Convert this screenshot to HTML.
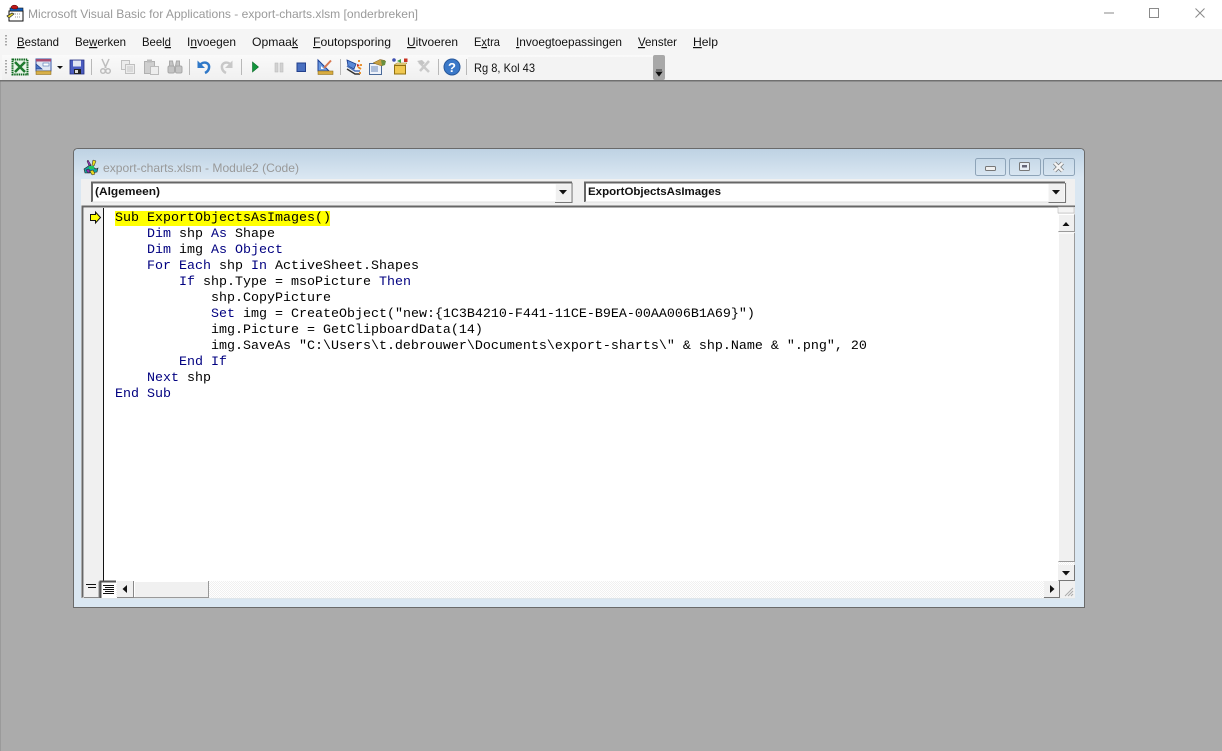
<!DOCTYPE html>
<html><head><meta charset="utf-8"><style>
html,body{margin:0;padding:0;width:1222px;height:751px;overflow:hidden;background:#ababab}
svg{display:block}
.m{font:12px "Liberation Sans",sans-serif;fill:#111}
.c{font:13.33px "Liberation Mono",monospace;fill:#000;white-space:pre}
.k{fill:#000080}
.u{text-decoration:underline}
</style></head><body>
<svg width="1222" height="751" viewBox="0 0 1222 751" xmlns="http://www.w3.org/2000/svg">
<defs>
<linearGradient id="tb" x1="0" y1="0" x2="0" y2="1"><stop offset="0" stop-color="#fafafa"/><stop offset="1" stop-color="#f0f0f0"/></linearGradient>
<linearGradient id="ti" x1="0" y1="0" x2="0" y2="1"><stop offset="0" stop-color="#bed2e3"/><stop offset="1" stop-color="#dae7f2"/></linearGradient>
<pattern id="dot" width="2" height="2" patternUnits="userSpaceOnUse"><rect width="2" height="2" fill="#fff"/><rect width="1" height="1" fill="#f0f0f0"/><rect x="1" y="1" width="1" height="1" fill="#f0f0f0"/></pattern>
</defs>
<rect width="1222" height="751" fill="#ababab"/>
<rect x="0" y="0" width="1" height="751" fill="#9a9a9a"/>
<!-- title bar -->
<rect width="1222" height="29" fill="#fff"/>
<g>
<rect x="9" y="11" width="14" height="10" fill="#fff" stroke="#111"/>
<rect x="10" y="8" width="13" height="3" fill="#1060c0" stroke="#111" stroke-width=".6"/>
<path d="M11 7.500C11 5 16 4 18 7l-1 2h-4z" fill="#c01818" stroke="#400" stroke-width=".5"/>
<path d="M7 16l5-3 2 1-5 4z" fill="#e8d830" stroke="#333" stroke-width=".8"/>
<path d="M15 14h6M15 17h6" stroke="#999" stroke-dasharray="1 1"/>
</g>
<text x="28" y="18" font-family="Liberation Sans" font-size="12" fill="#9a9a9a" textLength="390" lengthAdjust="spacingAndGlyphs">Microsoft Visual Basic for Applications - export-charts.xlsm [onderbreken]</text>
<path d="M1104 13h10" stroke="#8a8a8a"/>
<rect x="1149.500" y="8.500" width="9" height="9" fill="none" stroke="#8a8a8a"/>
<path d="M1195.500 8.500l9 9M1204.500 8.500l-9 9" stroke="#8a8a8a" fill="none"/>
<!-- menu bar -->
<rect y="29" width="1222" height="52" fill="#f5f5f5"/>
<path d="M6 35v1.500M6 38v1.500M6 41v1.500M6 44v1.500" stroke="#a8a8a8" stroke-width="2"/>
<text class="m" x="17" y="46" textLength="42" lengthAdjust="spacingAndGlyphs"><tspan class="u">B</tspan>estand</text>
<text class="m" x="75" y="46" textLength="51" lengthAdjust="spacingAndGlyphs">Be<tspan class="u">w</tspan>erken</text>
<text class="m" x="142" y="46" textLength="29" lengthAdjust="spacingAndGlyphs">Beel<tspan class="u">d</tspan></text>
<text class="m" x="187" y="46" textLength="49" lengthAdjust="spacingAndGlyphs">I<tspan class="u">n</tspan>voegen</text>
<text class="m" x="252" y="46" textLength="46" lengthAdjust="spacingAndGlyphs">Opmaa<tspan class="u">k</tspan></text>
<text class="m" x="313" y="46" textLength="78" lengthAdjust="spacingAndGlyphs"><tspan class="u">F</tspan>outopsporing</text>
<text class="m" x="407" y="46" textLength="51" lengthAdjust="spacingAndGlyphs"><tspan class="u">U</tspan>itvoeren</text>
<text class="m" x="474" y="46" textLength="26" lengthAdjust="spacingAndGlyphs">E<tspan class="u">x</tspan>tra</text>
<text class="m" x="516" y="46" textLength="106" lengthAdjust="spacingAndGlyphs"><tspan class="u">I</tspan>nvoegtoepassingen</text>
<text class="m" x="638" y="46" textLength="39" lengthAdjust="spacingAndGlyphs"><tspan class="u">V</tspan>enster</text>
<text class="m" x="693" y="46" textLength="25" lengthAdjust="spacingAndGlyphs"><tspan class="u">H</tspan>elp</text>
<!-- toolbar -->
<rect x="2" y="55" width="660" height="25" fill="url(#tb)"/>
<path d="M6 60v1.500M6 63v1.500M6 66v1.500M6 69v1.500M6 72v1.500" stroke="#a8a8a8" stroke-width="2"/>
<rect x="0" y="80" width="1222" height="1.500" fill="#707070"/>
<rect x="468" y="57" width="186" height="23" fill="#f3f3f3"/>
<rect x="653" y="55" width="12" height="25" rx="2" fill="#a8a8a8"/>
<path d="M656 70h6M656 72h6l-3 4z" fill="#111" stroke="#111" stroke-width=".7"/>
<!-- separators -->
<path d="M91.500 59v16M189.500 59v16M241.500 59v16M340.500 59v16M438.500 59v16M466.500 59v16" stroke="#b8b8b8"/>
<!-- excel -->
<rect x="12.500" y="59.500" width="15" height="15" fill="#e8f4e8" stroke="#106a20" stroke-width="2" stroke-dasharray="1.500 .7"/>
<path d="M15 62l10 10M25 62L15 72" stroke="#1f7a2e" stroke-width="2.500"/>
<!-- form -->
<rect x="36" y="59" width="15" height="12" fill="#dfe7f4" stroke="#3b5aa8"/>
<rect x="36" y="59" width="15" height="2.500" fill="#a84a70"/>
<path d="M36 64l6 5h-6z" fill="#4a78c8" stroke="#1a3a8a" stroke-width=".7"/>
<rect x="43" y="63" width="6" height="3" fill="#fff" stroke="#4a70b0" stroke-width=".6"/>
<rect x="36" y="71" width="15" height="3.500" fill="#d8b048" stroke="#806010" stroke-width=".5"/>
<path d="M57 66h6l-3 3z" fill="#111"/>
<!-- save -->
<rect x="70" y="60" width="14" height="14" fill="#4a5cc0" stroke="#232e80" stroke-width=".8"/>
<rect x="73" y="60.500" width="8" height="6" fill="#e0e4f2"/>
<rect x="74" y="69" width="7" height="5" fill="#222"/><rect x="75" y="70" width="3" height="3" fill="#ddd"/>
<!-- cut -->
<g stroke="#bdbdbd" fill="none" stroke-width="1.500"><path d="M102 59l4 9M109 59l-4 9"/><circle cx="103" cy="71" r="2.300"/><circle cx="108" cy="71" r="2.300"/></g>
<!-- copy -->
<g fill="#ececec" stroke="#c0c0c0"><rect x="121.500" y="60.500" width="8" height="9"/><rect x="125.500" y="64.500" width="9" height="9"/></g>
<path d="M127 67h6M127 69h6M127 71h6" stroke="#c8c8c8"/>
<!-- paste -->
<rect x="144.500" y="61.500" width="10" height="12" fill="#cfcfcf" stroke="#b0b0b0"/>
<rect x="147" y="59.500" width="5" height="3" fill="#bbb"/>
<rect x="150.500" y="66.500" width="8" height="8" fill="#eee" stroke="#bcbcbc"/>
<!-- find -->
<g fill="#c4c4c4" stroke="#a8a8a8"><path d="M169.500 61h3l1 5h-4zM176.500 61h3v5h-4z"/><rect x="168" y="66" width="6.500" height="7" rx="1.500"/><rect x="175.500" y="66" width="6.500" height="7" rx="1.500"/></g>
<!-- undo -->
<path d="M200 65c3-4 10-3 9 3c-.3 2-2 4-4 5" fill="none" stroke="#2f78c8" stroke-width="2.500"/>
<path d="M197.500 60.500l7.500 7.500h-7.500z" fill="#2f78c8"/>
<!-- redo -->
<path d="M231 65c-3-4-10-3-9 3c.3 2 2 4 4 5" fill="none" stroke="#c8c8c8" stroke-width="2.500"/>
<path d="M232.500 60.500L225 68h7.500z" fill="#c8c8c8"/>
<!-- run -->
<path d="M252.500 62l6 5-6 5z" fill="#12963c" stroke="#0a6a28" stroke-width=".6"/>
<!-- pause -->
<rect x="275" y="63" width="3" height="9" fill="#d2d2d2" stroke="#bbb" stroke-width=".6"/><rect x="280" y="63" width="3" height="9" fill="#d2d2d2" stroke="#bbb" stroke-width=".6"/>
<!-- stop -->
<rect x="297" y="63" width="8.500" height="8.500" fill="#4a70c0" stroke="#23408c"/>
<!-- design -->
<path d="M318 60v11h11z" fill="#6a9ae0" stroke="#1c3f96"/>
<path d="M321 66v3h3z" fill="#fff"/>
<rect x="318" y="71" width="15" height="3.500" fill="#d8ac40" stroke="#806010" stroke-width=".5"/>
<path d="M324 68l7-7.500" stroke="#d87850" stroke-width="2"/>
<!-- project -->
<path d="M347 60l9 4-2 5-6-3z" fill="#5a8ad8" stroke="#1d3c8c" stroke-width=".8"/>
<path d="M347 66l8 5 5 0" stroke="#4a70b8" fill="none" stroke-width="1.500"/>
<path d="M347 69l8 5h5" stroke="#333" fill="none" stroke-width="1.500"/>
<path d="M359 60v2M361 64v2M358 67l3 2M360 72v2" stroke="#e88a20" fill="none" stroke-width="1.800"/>
<path d="M357 64l3 1-3 2z" fill="#c83020"/>
<!-- properties -->
<rect x="369.500" y="63.500" width="12" height="11" fill="#eef2fa" stroke="#4a6a9a"/>
<path d="M371 67h7M371 69h7M371 71h7" stroke="#6a88b8"/>
<path d="M373 63l7-3.500 5 1-3 5.500z" fill="#c8a040" stroke="#806020" stroke-width=".5"/>
<path d="M381 60l5 1-1 4-3 1z" fill="#6a9040"/>
<!-- object -->
<rect x="394.500" y="65.500" width="11" height="8.500" fill="#f0c850" stroke="#907010"/>
<path d="M394 65l3-2h10l-2 2z" fill="#f8e090" stroke="#907010" stroke-width=".5"/>
<circle cx="394" cy="60" r="1.800" fill="#4050b0"/><rect x="404" y="58.500" width="3.500" height="3.500" fill="#c83020"/><path d="M397 61l4 2v-4z" fill="#40a040"/>
<!-- tools -->
<path d="M419 62l10 10M429 61l-9 10" stroke="#cacaca" stroke-width="2.500"/>
<path d="M417 61l5-1 3 3-3 2z" fill="#c4c4c4"/>
<!-- help -->
<circle cx="452" cy="67" r="8" fill="#3a78c8" stroke="#28589a"/>
<text x="452" y="72" text-anchor="middle" font-family="Liberation Sans" font-weight="bold" font-size="13" fill="#fff">?</text>
<text class="m" x="474" y="72" textLength="61" lengthAdjust="spacingAndGlyphs">Rg 8, Kol 43</text>

<!-- window -->
<path d="M78 148.500H1080Q1084.500 148.500 1084.500 153V607.500H73.500V153Q73.500 148.500 78 148.500Z" fill="#dae7f2" stroke="#6a6a6a"/>
<path d="M78.500 149H1080Q1084 149 1084 153V178H74V153Q74 149 78.500 149Z" fill="url(#ti)"/>
<rect x="81" y="179" width="994" height="419" fill="#f0f0f0"/>
<!-- window icon -->
<g>
<path d="M84 169l6-4 6 4 2-1-1 4-6 1-6 0z" fill="#14a0a0" stroke="#222" stroke-width=".6"/>
<path d="M88 160l3 5-2 1-2-5z" fill="#9030b0" stroke="#222" stroke-width=".5"/>
<path d="M93 160l-1 5 2 1 2-5z" fill="#e8d820" stroke="#222" stroke-width=".5"/>
<path d="M90 171l2 4 3-1-2-4z" fill="#e8d820" stroke="#222" stroke-width=".5"/>
<path d="M86 170l2 3 2-1-1-3z" fill="#9030b0" stroke="#222" stroke-width=".5"/>
<rect x="89" y="166" width="5" height="3" fill="#20c860"/>
</g>
<text x="103" y="172" font-family="Liberation Sans" font-size="12" fill="#999" textLength="196" lengthAdjust="spacingAndGlyphs">export-charts.xlsm - Module2 (Code)</text>
<!-- caption buttons -->
<g fill="none" stroke="#8ea4b8"><rect x="975.500" y="158.500" width="30" height="17" rx="2"/><rect x="1009.500" y="158.500" width="31" height="17" rx="2"/><rect x="1043.500" y="158.500" width="31" height="17" rx="2"/></g>
<rect x="985.500" y="166.500" width="10" height="4" fill="#f0f0f0" stroke="#777" rx="1"/>
<rect x="1019.500" y="162.500" width="10" height="8" fill="#e8eef4" stroke="#777" rx="1"/><rect x="1022" y="165" width="5" height="2.500" fill="#667"/>
<path d="M1054.500 163l8 8M1062.500 163l-8 8" stroke="#777" stroke-width="4"/><path d="M1054.500 163l8 8M1062.500 163l-8 8" stroke="#f4f4f4" stroke-width="2.500"/>
<!-- combos -->
<g>
<rect x="91.500" y="182" width="481" height="20" fill="#fff"/>
<path d="M92 202V182.500H572" fill="none" stroke="#666" stroke-width="2"/>
<path d="M92 202H572.500V182" fill="none" stroke="#e0e0e0"/>
<rect x="555.500" y="184" width="16" height="17" fill="#f0f0f0" stroke="#fff" stroke-width=".5"/>
<path d="M572 183v19.500h-17" fill="none" stroke="#777"/>
<path d="M559 190h8l-4 4.500z" fill="#111"/>
<text x="95" y="195" font-family="Liberation Sans" font-weight="bold" font-size="11" fill="#111" textLength="65" lengthAdjust="spacingAndGlyphs">(Algemeen)</text>
</g>
<g>
<rect x="585" y="182" width="481" height="20" fill="#fff"/>
<path d="M585 202V182.500H1065" fill="none" stroke="#666" stroke-width="2"/>
<path d="M585 202H1066V182" fill="none" stroke="#e0e0e0"/>
<rect x="1048.500" y="184" width="16" height="17" fill="#f0f0f0"/>
<path d="M1065.500 183v19.500h-17" fill="none" stroke="#777"/>
<path d="M1052 190h8l-4 4.500z" fill="#111"/>
<text x="588" y="195" font-family="Liberation Sans" font-weight="bold" font-size="11" fill="#111" textLength="133" lengthAdjust="spacingAndGlyphs">ExportObjectsAsImages</text>
</g>
<!-- code pane -->
<rect x="82" y="206" width="993" height="392" fill="#fff"/>
<rect x="84" y="208" width="19" height="373" fill="#f0f0f0"/>
<rect x="103" y="208" width="1" height="373" fill="#111"/>
<path d="M82.500 598V206.500H1075" fill="none" stroke="#666" stroke-width="2"/>
<path d="M1074.500 207V598H82" fill="none" stroke="#e4e4e4"/>
<!-- exec arrow -->
<path d="M90.500 214.500h5v-2.500l5 5.500-5 5.500v-2.500h-5z" fill="#ffff00" stroke="#111"/>
<!-- code -->
<rect x="115" y="211" width="215" height="15" fill="#ffff00"/>
<text class="c" x="115" y="221" xml:space="preserve"><tspan fill="#000">Sub ExportObjectsAsImages()</tspan></text>
<text class="c" x="115" y="237" xml:space="preserve">    <tspan class="k">Dim</tspan> shp <tspan class="k">As</tspan> Shape</text>
<text class="c" x="115" y="253" xml:space="preserve">    <tspan class="k">Dim</tspan> img <tspan class="k">As</tspan> <tspan class="k">Object</tspan></text>
<text class="c" x="115" y="269" xml:space="preserve">    <tspan class="k">For</tspan> <tspan class="k">Each</tspan> shp <tspan class="k">In</tspan> ActiveSheet.Shapes</text>
<text class="c" x="115" y="285" xml:space="preserve">        <tspan class="k">If</tspan> shp.Type = msoPicture <tspan class="k">Then</tspan></text>
<text class="c" x="115" y="301" xml:space="preserve">            shp.CopyPicture</text>
<text class="c" x="115" y="317" xml:space="preserve">            <tspan class="k">Set</tspan> img = CreateObject("new:{1C3B4210-F441-11CE-B9EA-00AA006B1A69}")</text>
<text class="c" x="115" y="333" xml:space="preserve">            img.Picture = GetClipboardData(14)</text>
<text class="c" x="115" y="349" xml:space="preserve">            img.SaveAs "C:\Users\t.debrouwer\Documents\export-sharts\" &amp; shp.Name &amp; ".png", 20</text>
<text class="c" x="115" y="365" xml:space="preserve">        <tspan class="k">End</tspan> <tspan class="k">If</tspan></text>
<text class="c" x="115" y="381" xml:space="preserve">    <tspan class="k">Next</tspan> shp</text>
<text class="c" x="115" y="397" xml:space="preserve"><tspan class="k">End</tspan> <tspan class="k">Sub</tspan></text>
<!-- vertical scrollbar -->
<rect x="1058" y="208" width="16" height="373" fill="#f0f0f0"/>
<rect x="1058" y="207" width="16" height="6" fill="#f4f4f4" stroke="#aaa" stroke-width=".5"/>
<path d="M1074.500 214.500V231.500H1058.500" fill="none" stroke="#9a9a9a"/>
<path d="M1058.500 231V214.500H1074" fill="none" stroke="#fff"/>
<path d="M1062.500 226h7l-3.500-4z" fill="#111"/>
<path d="M1074.500 233V561.500H1058.500" fill="none" stroke="#9a9a9a"/>
<path d="M1058.500 561V233H1074" fill="none" stroke="#fff"/>
<rect x="1058" y="562" width="16" height="3" fill="url(#dot)"/>
<path d="M1074.500 565V580.500H1058.500" fill="none" stroke="#777"/>
<path d="M1062 571h8l-4 4.500z" fill="#111"/>
<!-- horizontal bar -->
<rect x="84" y="581" width="991" height="17" fill="url(#dot)"/>
<rect x="84" y="581" width="15" height="17" fill="#f0f0f0"/>
<path d="M99 581.500V597.500H84" fill="none" stroke="#888"/>
<path d="M86 584.500h10M88 587.500h8" stroke="#111"/>
<rect x="100" y="581" width="16" height="17" fill="#fff"/>
<path d="M100.500 598V581.500H116" fill="none" stroke="#555" stroke-width="2"/>
<path d="M103 585.500h11M105 587.500h9M103 589.500h11M105 591.500h9M103 593.500h11" stroke="#111"/>
<rect x="117" y="581" width="16" height="17" fill="#f0f0f0"/>
<path d="M133.500 581V597.500H117" fill="none" stroke="#888"/>
<path d="M127 585v8l-4.500-4z" fill="#111"/>
<rect x="134" y="581" width="74" height="17" fill="#f0f0f0"/>
<path d="M208.500 581V597.500H134" fill="none" stroke="#999"/>
<path d="M134.500 597V581.500H208" fill="none" stroke="#fff"/>
<rect x="1044" y="581" width="15" height="17" fill="#f0f0f0"/>
<path d="M1059.500 581V597.500H1044" fill="none" stroke="#777"/>
<path d="M1050 585v8l4.500-4z" fill="#111"/>
<rect x="1060" y="581" width="15" height="17" fill="#f0f0f0"/>
<path d="M1065 596l8-8M1068 596l5-5M1071 596l2-2" stroke="#aaa" stroke-width="1"/>
</svg>
</body></html>
